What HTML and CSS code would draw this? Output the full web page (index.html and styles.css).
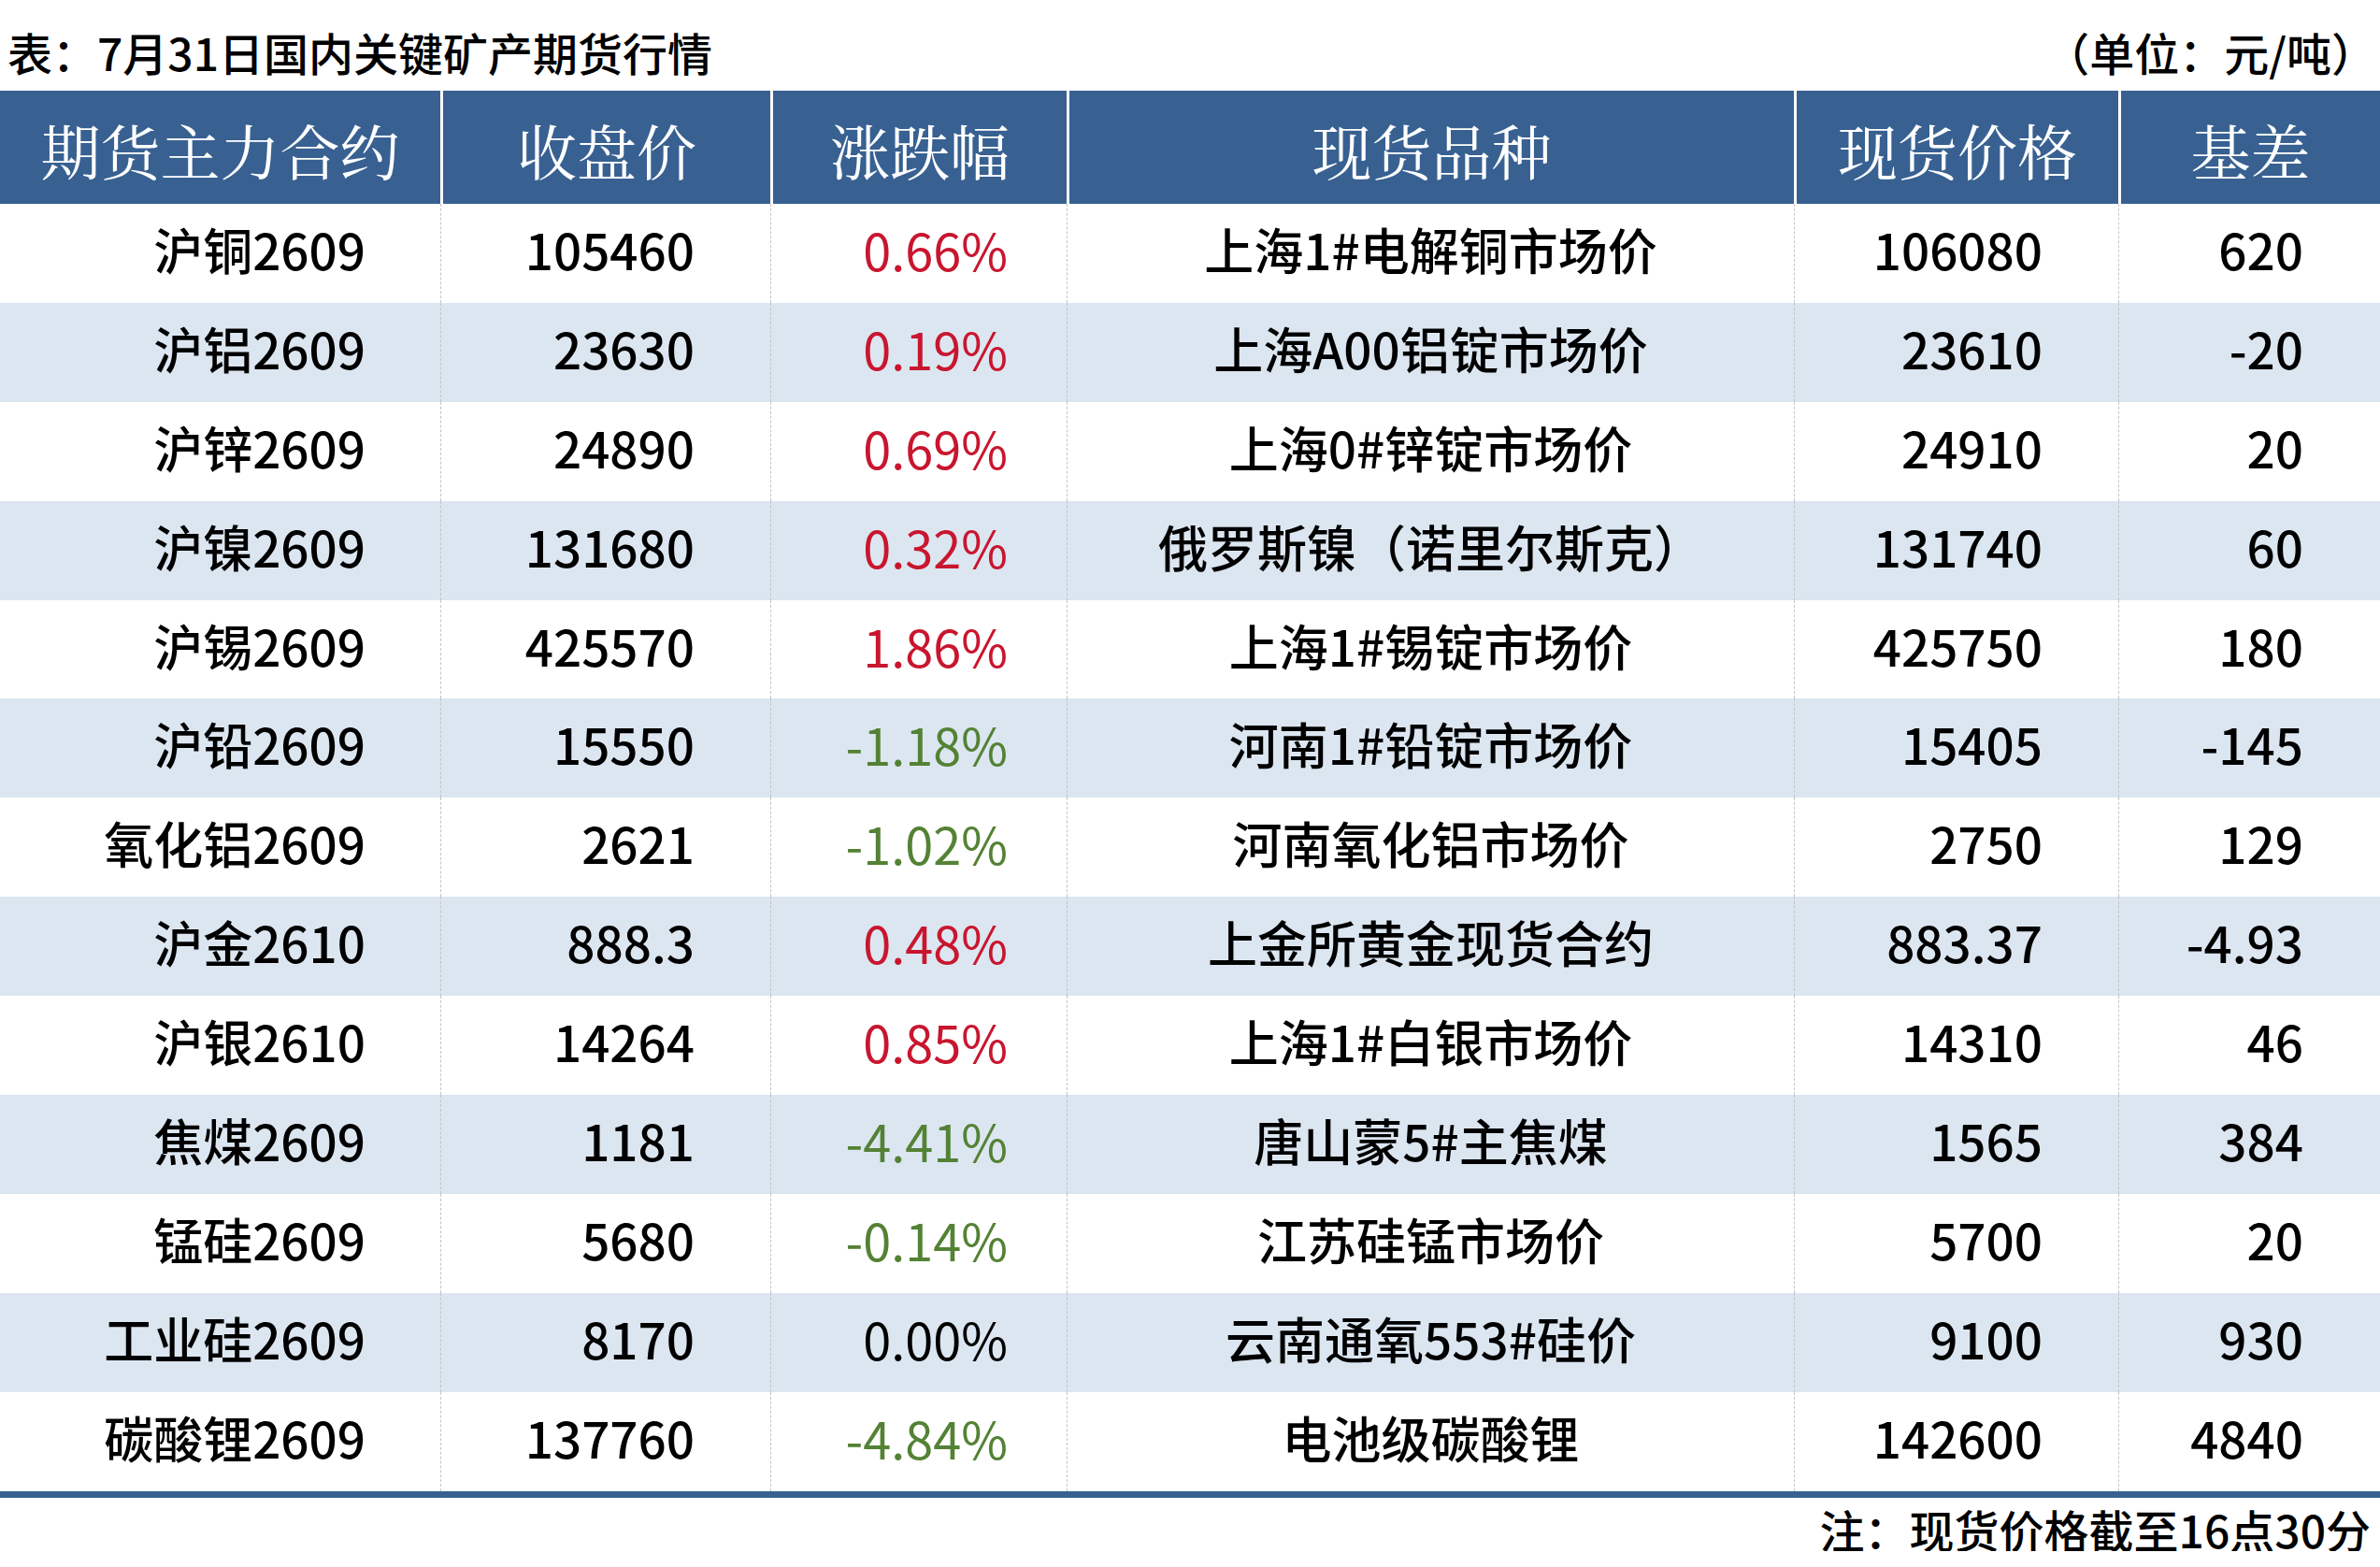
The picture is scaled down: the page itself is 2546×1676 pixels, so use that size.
FILE: index.html
```html
<!DOCTYPE html>
<html lang="zh-CN">
<head>
<meta charset="utf-8">
<title>7月31日国内关键矿产期货行情</title>
<link rel="stylesheet" href="styles.css">
</head>
<body>
<div class="page">
  <div class="caption">
    <span class="caption-title">表：7月31日国内关键矿产期货行情</span>
    <span class="caption-unit">（单位：元/吨）</span>
  </div>
  <table class="quotes">
    <colgroup>
      <col class="c1"><col class="c2"><col class="c3"><col class="c4"><col class="c5"><col class="c6">
    </colgroup>
    <thead>
      <tr>
        <th>期货主力合约</th><th>收盘价</th><th>涨跌幅</th><th>现货品种</th><th>现货价格</th><th>基差</th>
      </tr>
    </thead>
    <tbody>
      <tr><td class="name">沪铜2609</td><td class="num">105460</td><td class="pct up">0.66%</td><td class="spot">上海1#电解铜市场价</td><td class="num">106080</td><td class="basis">620</td></tr>
      <tr class="alt"><td class="name">沪铝2609</td><td class="num">23630</td><td class="pct up">0.19%</td><td class="spot">上海A00铝锭市场价</td><td class="num">23610</td><td class="basis">-20</td></tr>
      <tr><td class="name">沪锌2609</td><td class="num">24890</td><td class="pct up">0.69%</td><td class="spot">上海0#锌锭市场价</td><td class="num">24910</td><td class="basis">20</td></tr>
      <tr class="alt"><td class="name">沪镍2609</td><td class="num">131680</td><td class="pct up">0.32%</td><td class="spot">俄罗斯镍（诺里尔斯克）</td><td class="num">131740</td><td class="basis">60</td></tr>
      <tr><td class="name">沪锡2609</td><td class="num">425570</td><td class="pct up">1.86%</td><td class="spot">上海1#锡锭市场价</td><td class="num">425750</td><td class="basis">180</td></tr>
      <tr class="alt"><td class="name">沪铅2609</td><td class="num">15550</td><td class="pct down">-1.18%</td><td class="spot">河南1#铅锭市场价</td><td class="num">15405</td><td class="basis">-145</td></tr>
      <tr><td class="name">氧化铝2609</td><td class="num">2621</td><td class="pct down">-1.02%</td><td class="spot">河南氧化铝市场价</td><td class="num">2750</td><td class="basis">129</td></tr>
      <tr class="alt"><td class="name">沪金2610</td><td class="num">888.3</td><td class="pct up">0.48%</td><td class="spot">上金所黄金现货合约</td><td class="num">883.37</td><td class="basis">-4.93</td></tr>
      <tr><td class="name">沪银2610</td><td class="num">14264</td><td class="pct up">0.85%</td><td class="spot">上海1#白银市场价</td><td class="num">14310</td><td class="basis">46</td></tr>
      <tr class="alt"><td class="name">焦煤2609</td><td class="num">1181</td><td class="pct down">-4.41%</td><td class="spot">唐山蒙5#主焦煤</td><td class="num">1565</td><td class="basis">384</td></tr>
      <tr><td class="name">锰硅2609</td><td class="num">5680</td><td class="pct down">-0.14%</td><td class="spot">江苏硅锰市场价</td><td class="num">5700</td><td class="basis">20</td></tr>
      <tr class="alt"><td class="name">工业硅2609</td><td class="num">8170</td><td class="pct flat">0.00%</td><td class="spot">云南通氧553#硅价</td><td class="num">9100</td><td class="basis">930</td></tr>
      <tr><td class="name">碳酸锂2609</td><td class="num">137760</td><td class="pct down">-4.84%</td><td class="spot">电池级碳酸锂</td><td class="num">142600</td><td class="basis">4840</td></tr>
    </tbody>
  </table>
  <div class="note">注：现货价格截至16点30分</div>
</div>
</body>
</html>
```

FILE: styles.css
```css
html, body {
  margin: 0;
  padding: 0;
  background: #ffffff;
}

.page {
  width: 2546px;
  font-family: "Noto Sans CJK SC", "Noto Sans", sans-serif;
  color: #000000;
}

.caption {
  height: 97px;
  box-sizing: border-box;
  padding: 31px 4px 0 8px;
  display: flex;
  justify-content: space-between;
  align-items: flex-start;
  font-size: 48px;
  line-height: 48px;
  font-weight: 500;
}

.quotes {
  width: 2546px;
  table-layout: fixed;
  border-collapse: separate;
  border-spacing: 0;
  border-bottom: 7px solid #386192;
}

.c1 { width: 471px; }
.c2 { width: 353px; }
.c3 { width: 317px; }
.c4 { width: 778px; }
.c5 { width: 347px; }
.c6 { width: 280px; }

.quotes th {
  height: 121px;
  box-sizing: border-box;
  padding: 3px 0 0 0;
  background: #386192;
  color: #ffffff;
  font-family: "Noto Serif CJK SC", "Noto Sans CJK SC", serif;
  font-size: 64px;
  font-weight: 400;
  line-height: 64px;
  text-align: center;
  border-left: 3px solid #ffffff;
}

.quotes th:first-child {
  border-left: 0;
}

.quotes td {
  height: 105.9px;
  box-sizing: border-box;
  padding: 0 0 9px 0;
  font-size: 53px;
  line-height: 53px;
  font-weight: 500;
  text-align: right;
  white-space: nowrap;
  border-left: 1px dashed #c4c4c4;
}

.quotes td:first-child {
  border-left: 0;
}

.quotes tr.alt td {
  background: #dce6f1;
}

.quotes td.name { padding-right: 80px; }
.quotes td.num { padding-right: 81px; }
.quotes td.pct { padding-right: 63px; font-size: 54px; font-weight: 400; }
.quotes td.spot { text-align: center; }
.quotes td.basis { padding-right: 82px; }

.up { color: #c9162f; }
.down { color: #548235; }
.flat { color: #000000; }

.note {
  padding: 9px 10px 0 0;
  text-align: right;
  font-size: 48px;
  line-height: 48px;
  font-weight: 500;
}
```
